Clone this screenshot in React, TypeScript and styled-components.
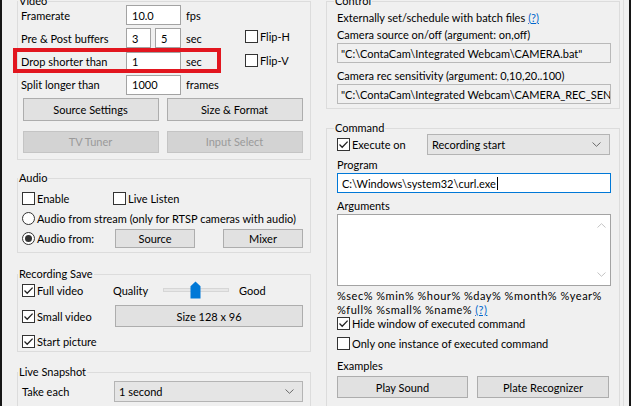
import React from "react";
import styled, { createGlobalStyle } from "styled-components";

const Global = createGlobalStyle`
  html, body { margin: 0; padding: 0; background: #ffffff; }
  body {
    font-family: Lato, "Liberation Sans", sans-serif;
    font-size: 11px;
    color: #000;
  }
  * { box-sizing: border-box; }
`;

const Window = styled.div`
  width: 631px;
  height: 406px;
  overflow: hidden;
  background: #f0f0f0;
  border-left: 2px solid #161616;
  border-right: 2px solid #161616;
  display: flex;
  align-items: flex-start;
`;

const LeftCol = styled.div`
  flex: none;
  width: 316px;
  padding-left: 15px;
  display: flex;
  flex-direction: column;
`;

const RightCol = styled.div`
  flex: none;
  width: 302px;
  padding-left: 8px;
  display: flex;
  flex-direction: column;
`;

const Gutter = styled.div`
  flex: none;
  width: 1px;
  height: 406px;
  margin-left: 3px;
  background: #dedede;
`;

const Group = styled.div<{ $mt: number; $h: number; $pt: number; $pl: number }>`
  position: relative;
  flex: none;
  width: 294px;
  height: ${(p) => p.$h}px;
  margin-top: ${(p) => p.$mt}px;
  padding: ${(p) => p.$pt}px 0 0 ${(p) => p.$pl}px;
  border: 1px solid #dcdcdc;
  display: flex;
  flex-direction: column;
`;

const Caption = styled.span<{ $left: number }>`
  position: absolute;
  top: -9px;
  left: ${(p) => p.$left}px;
  line-height: 15px;
  padding: 0 1px;
  background: #f0f0f0;
  white-space: nowrap;
`;

const Text = styled.span`
  white-space: nowrap;
`;

const Line = styled.div<{ $h: number; $mt?: number }>`
  height: ${(p) => p.$h}px;
  margin-top: ${(p) => p.$mt ?? 0}px;
  display: flex;
  align-items: center;
  white-space: nowrap;
`;

const Link = styled.span`
  color: #0066cc;
  text-decoration: underline;
  margin-left: 3px;
`;

const Edit = styled.div<{ $w: number; $h?: number; $ro?: boolean; $focus?: boolean; $pl?: number }>`
  flex: none;
  width: ${(p) => p.$w}px;
  height: ${(p) => p.$h ?? 20}px;
  padding-left: ${(p) => p.$pl ?? 5}px;
  background: ${(p) => (p.$ro ? "#f0f0f0" : "#ffffff")};
  border: 1px solid ${(p) => (p.$focus ? "#0078d7" : p.$ro ? "#b9b9b9" : "#a3a3a3")};
  display: flex;
  align-items: center;
  white-space: nowrap;
  overflow: hidden;
`;

const Caret = styled.span`
  display: inline-block;
  width: 1px;
  height: 13px;
  margin-left: 1px;
  background: #000;
`;

const Btn = styled.div<{ $w: number; $h: number; $disabled?: boolean }>`
  flex: none;
  width: ${(p) => p.$w}px;
  height: ${(p) => p.$h}px;
  display: flex;
  align-items: center;
  justify-content: center;
  white-space: nowrap;
  background: ${(p) => (p.$disabled ? "#d3d3d3" : "#e1e1e1")};
  border: 1px solid ${(p) => (p.$disabled ? "#c4c4c4" : "#adadad")};
  color: ${(p) => (p.$disabled ? "#9a9a9a" : "#000")};
`;

const Combo = styled.div<{ $w: number; $h: number }>`
  flex: none;
  width: ${(p) => p.$w}px;
  height: ${(p) => p.$h}px;
  padding: 0 8px 0 4px;
  background: #e5e5e5;
  border: 1px solid #b4b4b4;
  display: flex;
  align-items: center;
  justify-content: space-between;
  white-space: nowrap;
`;

const Box = styled.span`
  flex: none;
  width: 13px;
  height: 13px;
  border: 1px solid #333333;
  background: #ffffff;
  display: inline-flex;
  align-items: center;
  justify-content: center;
`;

const Round = styled(Box)`
  border-radius: 50%;
`;

const Dot = styled.span`
  width: 7px;
  height: 7px;
  border-radius: 50%;
  background: #333333;
`;

const Opt = styled.div<{ $w?: number; $mt?: number; $h?: number }>`
  display: flex;
  align-items: center;
  gap: 2px;
  white-space: nowrap;
  ${(p) => (p.$w ? `width: ${p.$w}px; flex: none;` : "")}
  ${(p) => (p.$h ? `height: ${p.$h}px;` : "")}
  margin-top: ${(p) => p.$mt ?? 0}px;
`;

const Tick = () => (
  <svg width="11" height="11" viewBox="0 0 11 11">
    <path d="M1.5 5.5 L4.2 8.2 L9.6 2.6" fill="none" stroke="#222" strokeWidth="1.3" />
  </svg>
);

const Check = ({ on, children, w, mt, h }: { on?: boolean; children: React.ReactNode; w?: number; mt?: number; h?: number }) => (
  <Opt $w={w} $mt={mt} $h={h}>
    <Box>{on && <Tick />}</Box>
    <Text>{children}</Text>
  </Opt>
);

const Radio = ({ on, children }: { on?: boolean; children: React.ReactNode }) => (
  <Opt>
    <Round>{on && <Dot />}</Round>
    <Text>{children}</Text>
  </Opt>
);

const Chevron = () => (
  <svg width="9" height="5" viewBox="0 0 9 5">
    <path d="M0.5 0.5 L4.5 4.3 L8.5 0.5" fill="none" stroke="#6a6a6a" strokeWidth="1" />
  </svg>
);

/* ---------- Video ---------- */

const VideoGrid = styled.div`
  display: grid;
  grid-template-columns: 105px 60px 59px auto;
  grid-auto-rows: 20px;
  row-gap: 3.33px;
  align-items: center;
`;

const Pair = styled.div`
  display: flex;
  gap: 4px;
`;

const FlipCell = styled.div`
  align-self: start;
  margin-top: 2px;
`;

const ButtonGrid = styled.div`
  display: grid;
  grid-template-columns: 136px 136px;
  grid-template-rows: 23px 22px;
  column-gap: 8px;
  row-gap: 10px;
  margin: 3px 0 0 1.5px;
`;

const Highlight = styled.div`
  position: absolute;
  left: -5px;
  top: 46px;
  width: 208px;
  height: 25px;
  border: 4px solid #e2161f;
  pointer-events: none;
`;

/* ---------- Audio ---------- */

const AudioRows = styled.div`
  display: grid;
  grid-auto-rows: 20px;
  align-items: center;
`;

const TwoOpts = styled.div`
  display: grid;
  grid-template-columns: 91px auto;
  align-items: center;
`;

const SourceRow = styled.div`
  display: grid;
  grid-template-columns: 93px 108px 80px;
  align-items: center;
`;

/* ---------- Recording save ---------- */

const SaveGrid = styled.div`
  display: grid;
  grid-template-columns: 91px auto;
  grid-template-rows: 22px 24px 20px;
  row-gap: 3px;
  align-items: center;
`;

const QualityRow = styled.div`
  display: flex;
  align-items: center;
`;

const QualityLabel = styled.span`
  width: 50px;
  flex: none;
`;

const GoodLabel = styled.span`
  margin-left: 10px;
`;

const SizeBtnWrap = styled.div`
  padding-left: 2px;
`;

const Slider = () => (
  <svg width="66" height="18" viewBox="0 0 66 18">
    <rect x="0.5" y="7.5" width="65" height="3" fill="#e7e7e7" stroke="#d6d6d6" />
    <path d="M27.5 5.2 L32.5 0.6 L37.5 5.2 V17.5 H27.5 Z" fill="#0078d7" />
  </svg>
);

/* ---------- Live ---------- */

const SnapRow = styled.div`
  display: grid;
  grid-template-columns: 92px 189px;
  align-items: center;
`;

/* ---------- Command ---------- */

const ExecRow = styled.div`
  display: grid;
  grid-template-columns: 90px 183px;
  height: 21px;
  align-items: center;
`;

const Memo = styled.div`
  width: 274px;
  height: 72px;
  background: #ffffff;
  border: 1px solid #a3a3a3;
  display: flex;
  justify-content: flex-end;
`;

const ScrollCol = styled.div`
  width: 17px;
  display: flex;
  flex-direction: column;
  justify-content: space-between;
  align-items: center;
  padding: 8px 0 8px;
`;

const Vars = styled.div`
  margin-top: 3px;
  line-height: 13.5px;
  letter-spacing: 0.5px;
  white-space: nowrap;
`;

const ExampleRow = styled.div`
  display: flex;
  gap: 9px;
  margin-top: 3px;
`;

const ArrowUp = () => (
  <svg width="9" height="5" viewBox="0 0 9 5">
    <path d="M0.5 4.5 L4.5 0.7 L8.5 4.5" fill="none" stroke="#c4c4c4" strokeWidth="1" />
  </svg>
);

const ArrowDown = () => (
  <svg width="9" height="5" viewBox="0 0 9 5">
    <path d="M0.5 0.5 L4.5 4.3 L8.5 0.5" fill="none" stroke="#c4c4c4" strokeWidth="1" />
  </svg>
);

export default function App() {
  return (
    <>
      <Global />
      <Window>
        <LeftCol>
          <Group $mt={1} $h={159} $pt={3} $pl={3}>
            <Caption $left={0}>Video</Caption>
            <VideoGrid>
              <Text>Framerate</Text>
              <Edit $w={55}>10.0</Edit>
              <Text>fps</Text>
              <span />

              <Text>Pre &amp; Post buffers</Text>
              <Pair>
                <Edit $w={25}>3</Edit>
                <Edit $w={26}>5</Edit>
              </Pair>
              <Text>sec</Text>
              <FlipCell>
                <Check>Flip-H</Check>
              </FlipCell>

              <Text>Drop shorter than</Text>
              <Edit $w={55}>1</Edit>
              <Text>sec</Text>
              <FlipCell>
                <Check>Flip-V</Check>
              </FlipCell>

              <Text>Split longer than</Text>
              <Edit $w={55}>1000</Edit>
              <Text>frames</Text>
              <span />
            </VideoGrid>
            <ButtonGrid>
              <Btn $w={136} $h={23}>Source Settings</Btn>
              <Btn $w={136} $h={23}>Size &amp; Format</Btn>
              <Btn $w={136} $h={22} $disabled>TV Tuner</Btn>
              <Btn $w={136} $h={22} $disabled>Input Select</Btn>
            </ButtonGrid>
            <Highlight />
          </Group>

          <Group $mt={18} $h={75} $pt={9} $pl={4}>
            <Caption $left={0}>Audio</Caption>
            <AudioRows>
              <TwoOpts>
                <Check>Enable</Check>
                <Check>Live Listen</Check>
              </TwoOpts>
              <Radio>Audio from stream (only for RTSP cameras with audio)</Radio>
              <SourceRow>
                <Radio on>Audio from:</Radio>
                <Btn $w={80} $h={19}>Source</Btn>
                <Btn $w={80} $h={19}>Mixer</Btn>
              </SourceRow>
            </AudioRows>
          </Group>

          <Group $mt={21} $h={78} $pt={4} $pl={4}>
            <Caption $left={0}>Recording Save</Caption>
            <SaveGrid>
              <Check on>Full video</Check>
              <QualityRow>
                <QualityLabel>Quality</QualityLabel>
                <Slider />
                <GoodLabel>Good</GoodLabel>
              </QualityRow>
              <Check on>Small video</Check>
              <SizeBtnWrap>
                <Btn $w={188} $h={22}>Size 128 x 96</Btn>
              </SizeBtnWrap>
              <Check on>Start picture</Check>
              <span />
            </SaveGrid>
          </Group>

          <Group $mt={20} $h={60} $pt={8} $pl={4}>
            <Caption $left={0}>Live Snapshot</Caption>
            <SnapRow>
              <Text>Take each</Text>
              <Combo $w={189} $h={21}>
                <Text>1 second</Text>
                <Chevron />
              </Combo>
            </SnapRow>
          </Group>
        </LeftCol>

        <RightCol>
          <Group $mt={1} $h={108} $pt={7} $pl={10}>
            <Caption $left={7}>Control</Caption>
            <Line $h={17}>
              Externally set/schedule with batch files<Link>(?)</Link>
            </Line>
            <Line $h={17}>Camera source on/off (argument: on,off)</Line>
            <Edit $w={274} $ro $pl={3}>"C:\ContaCam\Integrated Webcam\CAMERA.bat"</Edit>
            <Line $h={18} $mt={3}>
              Camera rec sensitivity (argument: 0,10,20..100)
            </Line>
            <Edit $w={274} $ro $pl={3}>"C:\ContaCam\Integrated Webcam\CAMERA_REC_SENSITIVITY.bat"</Edit>
          </Group>

          <Group $mt={19} $h={320} $pt={5} $pl={10}>
            <Caption $left={7}>Command</Caption>
            <ExecRow>
              <Check on>Execute on</Check>
              <Combo $w={183} $h={21}>
                <Text>Recording start</Text>
                <Chevron />
              </Combo>
            </ExecRow>
            <Line $h={18}>Program</Line>
            <Edit $w={274} $focus $pl={4}>
              C:\Windows\system32\curl.exe
              <Caret />
            </Edit>
            <Line $h={18} $mt={3}>
              Arguments
            </Line>
            <Memo>
              <ScrollCol>
                <ArrowUp />
                <ArrowDown />
              </ScrollCol>
            </Memo>
            <Vars>
              <div>%sec% %min% %hour% %day% %month% %year%</div>
              <div>
                %full% %small% %name%<Link>(?)</Link>
              </div>
            </Vars>
            <Check on h={16} mt={-1}>
              Hide window of executed command
            </Check>
            <Check h={16} mt={4}>
              Only one instance of executed command
            </Check>
            <Line $h={16} $mt={6}>
              Examples
            </Line>
            <ExampleRow>
              <Btn $w={131} $h={22}>Play Sound</Btn>
              <Btn $w={132} $h={22}>Plate Recognizer</Btn>
            </ExampleRow>
          </Group>
        </RightCol>
        <Gutter />
      </Window>
    </>
  );
}
